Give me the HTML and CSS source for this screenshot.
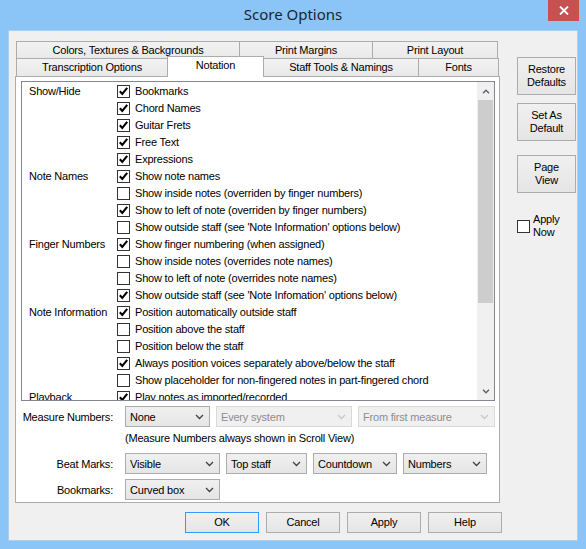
FILE: index.html
```html
<!DOCTYPE html>
<html>
<head>
<meta charset="utf-8">
<title>Score Options</title>
<link rel="stylesheet" href="styles.css">
</head>
<body>
<div class="window">
  <div class="titlebar">
    <span class="title">Score Options</span>
    <div class="close">
      <svg width="10" height="9" viewBox="0 0 10 9"><path d="M1 0.5 L9 8.5 M9 0.5 L1 8.5" stroke="#fff" stroke-width="1.8" fill="none"/></svg>
    </div>
  </div>
  <div class="client">
    <div class="main">
      <div class="tabarea">
        <div class="tabrow back">
          <div class="tab t-colors">Colors, Textures &amp; Backgrounds</div>
          <div class="tab t-margins">Print Margins</div>
          <div class="tab t-layout">Print Layout</div>
        </div>
        <div class="tabrow front">
          <div class="tab t-trans">Transcription Options</div>
          <div class="tab t-notation selected">Notation</div>
          <div class="tab t-staff">Staff Tools &amp; Namings</div>
          <div class="tab t-fonts">Fonts</div>
        </div>
        <div class="panel">
          <div class="listbox">
            <div class="list">
              <div class="row"><span class="lab">Show/Hide</span><span class="cb on"></span><span class="txt">Bookmarks</span></div>
              <div class="row"><span class="lab"></span><span class="cb on"></span><span class="txt">Chord Names</span></div>
              <div class="row"><span class="lab"></span><span class="cb on"></span><span class="txt">Guitar Frets</span></div>
              <div class="row"><span class="lab"></span><span class="cb on"></span><span class="txt">Free Text</span></div>
              <div class="row"><span class="lab"></span><span class="cb on"></span><span class="txt">Expressions</span></div>
              <div class="row"><span class="lab">Note Names</span><span class="cb on"></span><span class="txt">Show note names</span></div>
              <div class="row"><span class="lab"></span><span class="cb"></span><span class="txt">Show inside notes (overriden by finger numbers)</span></div>
              <div class="row"><span class="lab"></span><span class="cb on"></span><span class="txt">Show to left of note (overriden by finger numbers)</span></div>
              <div class="row"><span class="lab"></span><span class="cb"></span><span class="txt">Show outside staff (see 'Note Information' options below)</span></div>
              <div class="row"><span class="lab">Finger Numbers</span><span class="cb on"></span><span class="txt">Show finger numbering (when assigned)</span></div>
              <div class="row"><span class="lab"></span><span class="cb"></span><span class="txt">Show inside notes (overrides note names)</span></div>
              <div class="row"><span class="lab"></span><span class="cb"></span><span class="txt">Show to left of note (overrides note names)</span></div>
              <div class="row"><span class="lab"></span><span class="cb on"></span><span class="txt">Show outside staff (see 'Note Infomation' options below)</span></div>
              <div class="row"><span class="lab">Note Information</span><span class="cb on"></span><span class="txt">Position automatically outside staff</span></div>
              <div class="row"><span class="lab"></span><span class="cb"></span><span class="txt">Position above the staff</span></div>
              <div class="row"><span class="lab"></span><span class="cb"></span><span class="txt">Position below the staff</span></div>
              <div class="row"><span class="lab"></span><span class="cb on"></span><span class="txt">Always position voices separately above/below the staff</span></div>
              <div class="row"><span class="lab"></span><span class="cb"></span><span class="txt">Show placeholder for non-fingered notes in part-fingered chord</span></div>
              <div class="row"><span class="lab">Playback</span><span class="cb on"></span><span class="txt">Play notes as imported/recorded</span></div>
            </div>
            <div class="scrollbar">
              <div class="sb-btn"><svg width="8" height="5" viewBox="0 0 8 5"><path d="M1 4.2 L4 1.2 L7 4.2" stroke="#606060" stroke-width="1.4" fill="none"/></svg></div>
              <div class="thumb"></div>
              <div class="track"></div>
              <div class="sb-btn"><svg width="8" height="5" viewBox="0 0 8 5"><path d="M1 0.8 L4 3.8 L7 0.8" stroke="#606060" stroke-width="1.4" fill="none"/></svg></div>
            </div>
          </div>
          <div class="form">
            <div class="frow">
              <span class="flab">Measure Numbers:</span>
              <div class="combo w85"><span>None</span><svg class="chev" width="9" height="6" viewBox="0 0 9 6"><path d="M1 1 L4.5 4.5 L8 1" stroke="#404040" stroke-width="1.3" fill="none"/></svg></div>
              <div class="combo disabled w136"><span>Every system</span><svg class="chev" width="9" height="6" viewBox="0 0 9 6"><path d="M1 1 L4.5 4.5 L8 1" stroke="#c8c8c8" stroke-width="1.3" fill="none"/></svg></div>
              <div class="combo disabled w137"><span>From first measure</span><svg class="chev" width="9" height="6" viewBox="0 0 9 6"><path d="M1 1 L4.5 4.5 L8 1" stroke="#c8c8c8" stroke-width="1.3" fill="none"/></svg></div>
            </div>
            <div class="note">(Measure Numbers always shown in Scroll View)</div>
            <div class="frow">
              <span class="flab">Beat Marks:</span>
              <div class="combo w95"><span>Visible</span><svg class="chev" width="9" height="6" viewBox="0 0 9 6"><path d="M1 1 L4.5 4.5 L8 1" stroke="#404040" stroke-width="1.3" fill="none"/></svg></div>
              <div class="combo w81"><span>Top staff</span><svg class="chev" width="9" height="6" viewBox="0 0 9 6"><path d="M1 1 L4.5 4.5 L8 1" stroke="#404040" stroke-width="1.3" fill="none"/></svg></div>
              <div class="combo w84"><span>Countdown</span><svg class="chev" width="9" height="6" viewBox="0 0 9 6"><path d="M1 1 L4.5 4.5 L8 1" stroke="#404040" stroke-width="1.3" fill="none"/></svg></div>
              <div class="combo w84"><span>Numbers</span><svg class="chev" width="9" height="6" viewBox="0 0 9 6"><path d="M1 1 L4.5 4.5 L8 1" stroke="#404040" stroke-width="1.3" fill="none"/></svg></div>
            </div>
            <div class="frow gap5">
              <span class="flab">Bookmarks:</span>
              <div class="combo w95"><span>Curved box</span><svg class="chev" width="9" height="6" viewBox="0 0 9 6"><path d="M1 1 L4.5 4.5 L8 1" stroke="#404040" stroke-width="1.3" fill="none"/></svg></div>
            </div>
          </div>
        </div>
      </div>
      <div class="side">
        <div class="sbtn">Restore<br>Defaults</div>
        <div class="sbtn second">Set As<br>Default</div>
        <div class="sbtn third">Page<br>View</div>
        <div class="applynow"><span class="cb"></span><span class="antext">Apply<br>Now</span></div>
      </div>
    </div>
    <div class="footer">
      <div class="btn default">OK</div>
      <div class="btn">Cancel</div>
      <div class="btn">Apply</div>
      <div class="btn">Help</div>
    </div>
  </div>
</div>
</body>
</html>
```

FILE: styles.css
```css
* { box-sizing: border-box; }
html, body { margin: 0; padding: 0; }
body {
  width: 586px;
  height: 549px;
  overflow: hidden;
  background: #8bc5f7;
  font-family: "Liberation Sans", Arial, sans-serif;
  font-size: 11px;
  letter-spacing: -0.2px;
  color: #000;
}
.window { width: 586px; height: 549px; }

.titlebar {
  height: 30px;
  display: grid;
  grid-template-columns: 1fr auto 1fr;
  align-items: start;
}
.title {
  grid-column: 2;
  font-family: "Noto Sans", "Open Sans", sans-serif;
  font-size: 15px;
  letter-spacing: 0;
  line-height: 28px;
  color: #1a2530;
}
.close {
  grid-column: 3;
  justify-self: end;
  margin-right: 7px;
  width: 31px;
  height: 21px;
  background: #c75050;
  display: flex;
  align-items: center;
  justify-content: center;
}

.client {
  margin: 0 8px;
  height: 511px;
  background: #f0f0f0;
  padding-top: 11px;
  box-shadow: inset 0 0 0 1px #a9cff2;
}
.main { display: flex; align-items: flex-start; }
.tabarea { margin-left: 7px; width: 485px; }

.tabrow { display: flex; margin-left: 1px; align-items: flex-start; }
.tab {
  height: 17px;
  border: 1px solid #acacac;
  border-bottom: none;
  background: linear-gradient(#f2f2f2, #e9e9e9);
  text-align: center;
  line-height: 16px;
  white-space: nowrap;
}
.tab + .tab { margin-left: -1px; }
.front .tab { height: 18px; line-height: 17px; }
.front .tab.selected {
  height: 21px;
  margin-top: -2px;
  margin-bottom: -1px;
  background: #fff;
  position: relative;
  z-index: 1;
}
.t-colors { width: 224px; }
.t-margins { width: 134px; }
.t-layout { width: 126px; }
.t-trans { width: 152px; }
.t-notation { width: 97px; }
.t-staff { width: 156px; }
.t-fonts { width: 81px; }

.panel {
  height: 427px;
  border: 1px solid #acacac;
  background: #fff;
  padding: 4px 4px 0 5px;
}

.listbox {
  display: flex;
  height: 320px;
  border: 1px solid #828790;
  background: #fff;
}
.list {
  flex: 1;
  padding: 1px 0 0 7px;
  overflow: hidden;
}
.row { display: flex; height: 17px; line-height: 17px; white-space: nowrap; }
.lab { width: 88px; flex: none; }
.cb {
  flex: none;
  width: 13px;
  height: 13px;
  margin-top: 2px;
  border: 1px solid #333;
  background: #fff no-repeat center;
}
.cb.on {
  background-image: url("data:image/svg+xml;utf8,<svg xmlns='http://www.w3.org/2000/svg' width='11' height='11' viewBox='0 0 11 11'><path d='M1.8 5.2 L4.3 7.9 L9.2 1.9' stroke='black' stroke-width='2.1' fill='none'/></svg>");
}
.txt { margin-left: 5px; }

.scrollbar {
  width: 17px;
  flex: none;
  background: #f0f0f0;
  display: flex;
  flex-direction: column;
}
.sb-btn {
  height: 17px;
  display: flex;
  align-items: center;
  justify-content: center;
}
.scrollbar .sb-btn:first-child { height: 18px; }
.thumb { height: 203px; margin: 0 1px; background: #cdcdcd; }
.track { flex: 1; }

.form { padding-top: 5px; }
.frow { display: flex; align-items: center; height: 21px; gap: 6px; }
.frow.gap5 { margin-top: 5px; }
.flab {
  width: 92px;
  margin-right: 6px;
  flex: none;
  display: flex;
  justify-content: flex-end;
  white-space: nowrap;
}
.combo {
  height: 21px;
  flex: none;
  border: 1px solid #acacac;
  background: linear-gradient(#f0f0f0, #e5e5e5);
  display: flex;
  align-items: center;
  justify-content: space-between;
  padding: 0 5px 0 4px;
  white-space: nowrap;
}
.combo.disabled {
  border-color: #d9d9d9;
  background: #f0f0f0;
  color: #8d8d8d;
}
.w81 { width: 81px; }
.w84 { width: 84px; }
.w85 { width: 85px; }
.w95 { width: 95px; }
.w136 { width: 136px; }
.w137 { width: 137px; }
.note { padding: 4px 0 7px 104px; line-height: 15px; white-space: nowrap; }

.side { margin-left: 17px; margin-top: 16px; display: flex; flex-direction: column; }
.sbtn {
  width: 59px;
  height: 38px;
  border: 1px solid #acacac;
  background: linear-gradient(#f0f0f0, #e5e5e5);
  display: flex;
  align-items: center;
  justify-content: center;
  text-align: center;
  line-height: 13px;
}
.sbtn.second { margin-top: 8px; }
.sbtn.third { margin-top: 14px; }
.applynow { display: flex; align-items: center; margin-top: 20px; }
.applynow .cb { margin-top: 0; }
.antext { margin-left: 3px; line-height: 13px; }

.footer { display: flex; gap: 7px; margin-top: 9px; padding-left: 177px; }
.btn {
  width: 74px;
  height: 21px;
  border: 1px solid #acacac;
  background: linear-gradient(#f0f0f0, #e5e5e5);
  text-align: center;
  line-height: 19px;
}
.btn.default { border-color: #3399ff; }
```
